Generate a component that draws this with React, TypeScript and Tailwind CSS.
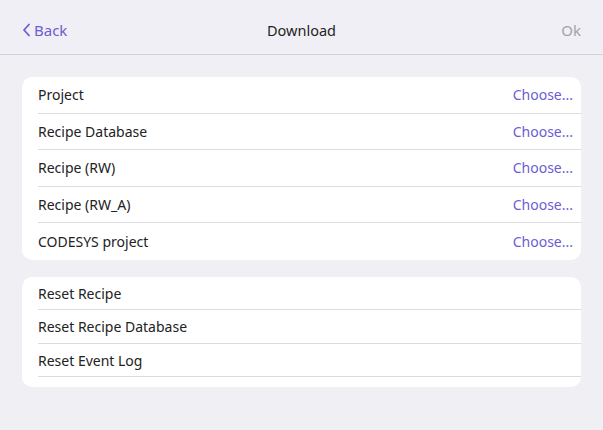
import React from "react";

const font = { fontFamily: '"Noto Sans", "Open Sans", sans-serif' };

function Row({ label, choose, last, h }: { label: string; choose?: boolean; last?: boolean; h: string }) {
  return (
    <div className={`flex items-center pl-4 ${h}`}>
      <div className={`flex h-full flex-1 items-center pr-2 ${last ? "" : "border-b border-[#dcdce0]"}`}>
        <span className="flex-1 text-[14px] text-[#222222]">{label}</span>
        {choose && <span className="text-[14px] text-[#6c5dd3]">Choose...</span>}
      </div>
    </div>
  );
}

export default function App() {
  const items = ["Project", "Recipe Database", "Recipe (RW)", "Recipe (RW_A)", "CODESYS project"];
  const resets = ["Reset Recipe", "Reset Recipe Database", "Reset Event Log"];
  return (
    <div style={font} className="h-[430px] w-[603px] overflow-hidden bg-[#efeff4]">
      <div className="relative flex h-[55px] items-center justify-between border-b border-[#d4d4d8] bg-[#f0eff5] px-[22px] pt-[6px]">
        <div className="flex items-center gap-[3px] text-[15px] text-[#6c5dd3]">
          <svg width="9" height="14" viewBox="0 0 9 14" fill="none">
            <path d="M7 1.5 L2 7 L7 12.5" stroke="#6c5dd3" strokeWidth="1.8" strokeLinecap="round" strokeLinejoin="round" />
          </svg>
          <span>Back</span>
        </div>
        <div className="absolute left-1/2 top-[6px] flex h-[49px] -translate-x-1/2 items-center text-[14.5px] text-[#1f1f1f]">Download</div>
        <div className="text-[15px] text-[#a3a3a8]">Ok</div>
      </div>
      <div className="flex flex-col gap-[17px] px-[22px] pt-[22px]">
        <div className="overflow-hidden rounded-[10px] bg-white">
          {items.map((t, i) => (
            <Row key={t} label={t} choose h="h-[36.6px]" last={i === items.length - 1} />
          ))}
        </div>
        <div className="overflow-hidden rounded-[10px] bg-white pb-[10px]">
          {resets.map((t) => (
            <Row key={t} label={t} h="h-[33.5px]" />
          ))}
        </div>
      </div>
    </div>
  );
}
